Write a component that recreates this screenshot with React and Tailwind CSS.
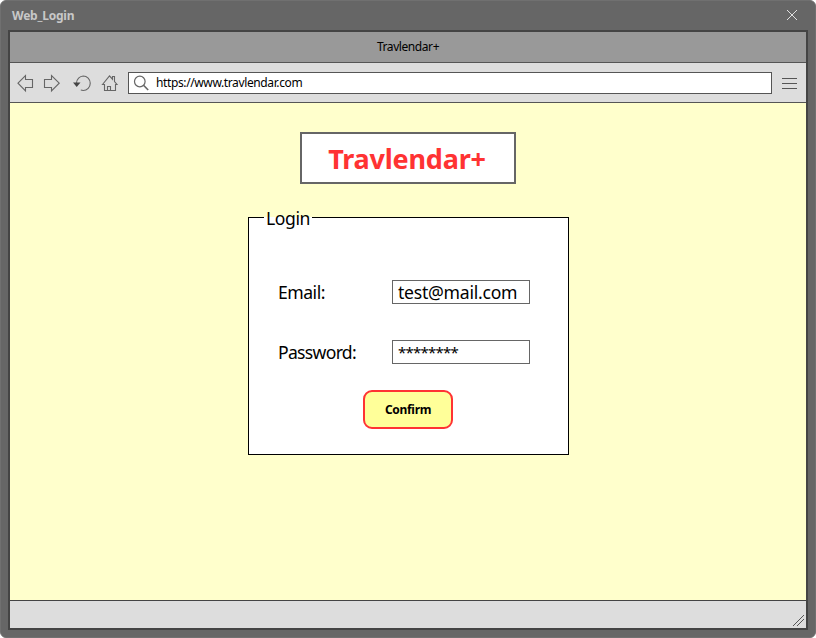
function Field({ label, value, labelClass, valueClass }) {
  return (
    <div className="flex h-6 items-center">
      <span className={`w-[114px] text-[17.6px] leading-6 ${labelClass}`}>{label}</span>
      <div className="flex h-6 w-[138px] items-center border border-[#666] bg-white pl-[5px]">
        <span className={`whitespace-nowrap leading-[22px] ${valueClass}`}>{value}</span>
      </div>
    </div>
  );
}

function NavIcons() {
  return (
    <svg width="118" height="38" viewBox="10 64 118 38" fill="none" stroke="#666" strokeWidth="1.1" className="shrink-0">
      <path d="M18 83.2 L25.5 75.5 V79.5 H32.5 V87.5 H25.5 V91 Z" />
      <path d="M59.2 83.2 L51.5 75.5 V79.5 H44.5 V87.5 H51.5 V91 Z" />
      <path d="M76.5 83 A7 7.5 0 0 1 83.2 76 A7 7.2 0 0 1 83.2 90.5 L80.8 90" />
      <path d="M73 82.5 H80.5 L76.7 87 Z" fill="#444" stroke="none" />
      <path d="M102.5 84.5 L109.5 75.8 L112.5 79.2 V76.5 H114.5 V81.5 L117 84.5 H115.5 V90.5 H104.5 V84.5 Z" />
      <path d="M107.5 90.5 V86.5 H110.5 V90.5" />
    </svg>
  );
}

export default function App() {
  return (
    <div className="h-[638px] w-[816px] bg-white font-['Noto_Sans','Open_Sans',sans-serif] text-black">
      <div className="flex h-full flex-col rounded-[6px] border border-[#707070] bg-[#666] px-[7px] pb-[7px]">
        <header className="flex h-[29px] shrink-0 items-center justify-between pl-1 pr-[10px]">
          <span className="text-[12px] font-bold leading-4 tracking-[-0.22px] text-[#c8c8c8]">Web_Login</span>
          <svg width="12" height="12" stroke="#e0e0e0" strokeWidth="1" className="-mt-[2px]">
            <path d="M1 1 L11 11 M11 1 L1 11" />
          </svg>
        </header>
        <div className="flex h-[600px] flex-col border-2 border-[#444]">
          <div className="flex h-[31px] shrink-0 items-center justify-center border-b border-[#555] bg-[#999] text-[12px]">
            <span className="leading-4 tracking-[-0.42px]">Travlendar+</span>
          </div>
          <div className="flex h-10 shrink-0 items-center border-b border-[#555] bg-[#ddd]">
            <NavIcons />
            <div className="flex h-[22px] w-[644px] items-center border border-[#555] bg-white">
              <svg width="20" height="20" fill="none" stroke="#666" strokeWidth="1.2" className="ml-1">
                <circle cx="6.8" cy="8.5" r="5.3" />
                <path d="M10.5 12.3 L15.2 17" strokeWidth="1.6" />
              </svg>
              <span className="ml-[3px] text-[12px] leading-4 tracking-[-0.38px]">https://www.travlendar.com</span>
            </div>
            <svg width="16" height="13" stroke="#555" strokeWidth="1" className="ml-[10px] mt-px">
              <path d="M0 1.5 H15 M0 6.5 H15 M0 11.5 H15" />
            </svg>
          </div>
          <main className="flex grow flex-col items-center bg-[#ffffcc] pt-[29px]">
            <h1 className="flex h-[52px] w-[216px] items-center justify-center border-2 border-[#666] bg-white pr-[2px] pt-[2px] text-[27px] font-bold leading-9 tracking-[-0.2px] text-[#ff3333]">
              Travlendar+
            </h1>
            <section className="relative ml-px mt-[33px] h-[238px] w-[321px] border border-black bg-white">
              <div className="absolute -top-3 left-[15px] h-6 w-12 text-[17.6px] leading-6">
                <div className="absolute left-0 top-3 h-px w-12 -translate-y-px bg-white" />
                <span className="relative left-[2px] tracking-[-0.4px]">Login</span>
              </div>
              <div className="flex flex-col gap-9 pl-[29px] pt-[62px]">
                <Field label="Email:" value="test@mail.com" labelClass="tracking-[-0.5px]" valueClass="text-[17.6px] tracking-[-0.25px]" />
                <Field label="Password:" value="********" labelClass="tracking-[-0.7px]" valueClass="text-[15px] tracking-[-0.75px] -mt-px" />
              </div>
              <button className="ml-[114px] mt-[26px] flex h-[39px] w-[90px] items-center justify-center rounded-[9px] border-2 border-[#ff3333] bg-[#ffff99] text-[12px] font-bold leading-4 tracking-[-0.3px]">
                Confirm
              </button>
            </section>
          </main>
          <footer className="flex h-7 shrink-0 items-end justify-end border-t border-[#444] bg-[#ddd]">
            <svg width="14" height="15" stroke="#555" strokeWidth="1">
              <path d="M1 13 L12 2 M5 13 L12 6" />
            </svg>
          </footer>
        </div>
      </div>
    </div>
  );
}
